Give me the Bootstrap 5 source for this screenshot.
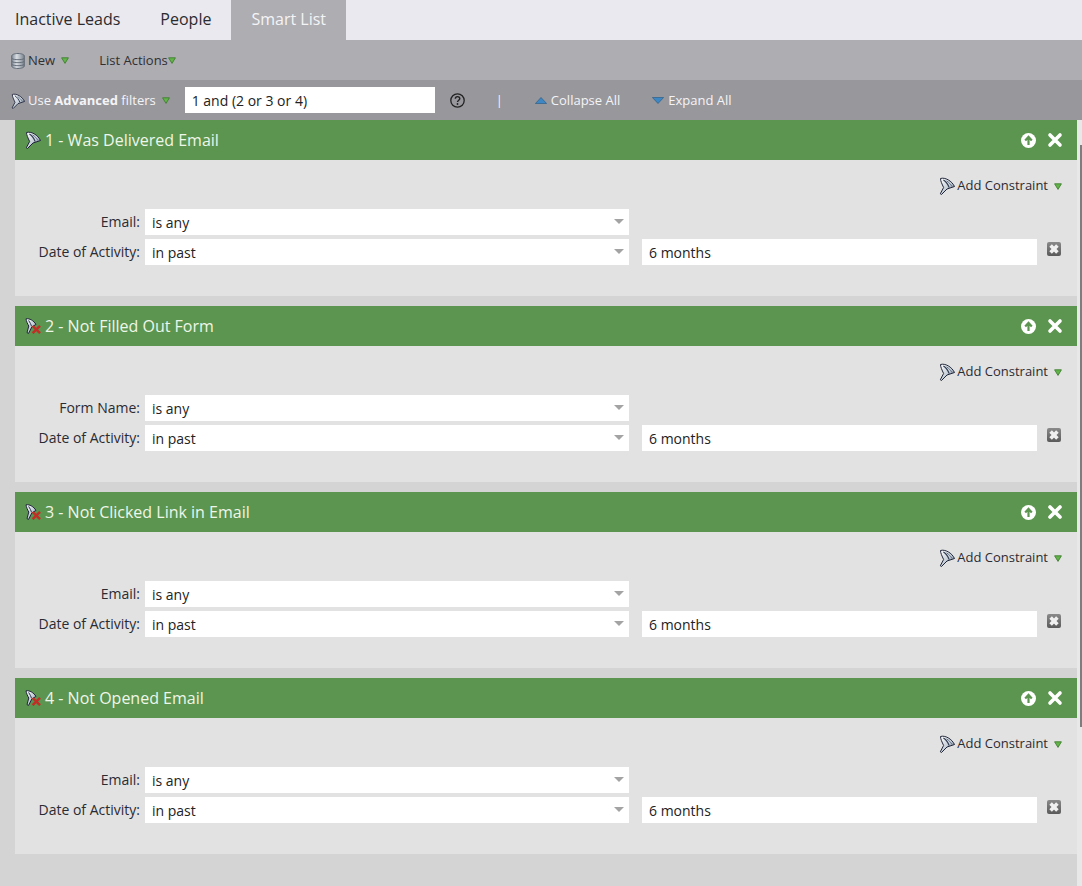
<!DOCTYPE html>
<html lang="en">
<head>
<meta charset="utf-8">
<title>Smart List</title>
<link rel="stylesheet" href="https://cdn.jsdelivr.net/npm/bootstrap@5.3.0/dist/css/bootstrap.min.css">
<style>
html,body{height:100%;overflow:hidden}
body{background:#d4d4d4;font-family:"Open Sans","Noto Sans",sans-serif;font-size:13px;color:#222}
.tabbar{background:#e9e9ef;height:40px}
.tabitem{font-size:16px;line-height:38px;height:40px;padding:0 15px;color:#2c2c30;text-decoration:none}
.tabitem.second{padding:0 20px 0 25px}
.tabitem.on{background:#aeadb2;color:#f4f4f6;padding:0 20px}
.toolbar{background:#aeadb2;height:40px;padding:1px 0 0 11px;color:#303033}
.filterbar{background:#98979c;height:40px;padding:1px 0 0 11px;color:#f4f4f6}
.gap3{margin-left:3px}
.tri7{margin-left:6px}
.listact{margin-left:30px}
.logic{width:250px;height:26px;background:#fff;color:#222;font-size:14px;line-height:27px;padding-left:7px;margin-left:15px;margin-top:-1px}
.helpic{margin-left:15px}
.sep{margin:0 32px 0 31px;font-size:13px}
.actlabel{margin-left:4px}
.expic{margin-left:32px}
.contentrow{display:flex}
.listwrap{flex:1 1 auto;padding-left:15px;display:flex;flex-direction:column;gap:10px}
.scrollstrip{flex:none;width:5px;height:766px;background:#e8e8e8;position:relative}
.scrollthumb{margin:25px 0 0 3px;width:2px;height:582px;background:#7d7d7d}
.rulehead{background:#5c954f;height:40px;color:#eef6ea;font-size:16px;padding:0 14px 0 10px}
.rulebody{background:#e2e2e2;height:136px;padding:17px 15px 0 0}
.addc{height:18px;color:#2b2b33;font-size:13px}
.addlabel{margin:0 6px 0 2px}
.fields{margin-top:14px}
.fieldrow{height:26px;margin-bottom:4px}
.flabel{flex:none;width:125px;text-align:right;font-size:14px;color:#2b2b33;margin-right:5px;line-height:26px}
.selbox{flex:none;width:484px;height:26px;background:#fff;color:#222;font-size:14px;line-height:28px;padding-left:7px;position:relative}
.selbox::after{content:"";position:absolute;right:5px;top:10px;border-left:5px solid transparent;border-right:5px solid transparent;border-top:5px solid #a3a3a3}
.valbox{flex:none;width:395px;height:26px;background:#fff;color:#222;font-size:14px;line-height:28px;padding-left:7px;margin-left:13px}
.rowx{margin:3px 0 0 10px}
.upic{margin-right:11px}
svg{display:block;flex:none}
</style>
</head>
<body>
<svg width="0" height="0" class="position-absolute">
<defs>
<linearGradient id="fun" x1="0" y1="0" x2="1" y2="1"><stop offset="0" stop-color="#ffffff"/><stop offset=".55" stop-color="#c3ccd6"/><stop offset="1" stop-color="#46536a"/></linearGradient>
<linearGradient id="cyl" x1="0" y1="0" x2="1" y2="0"><stop offset="0" stop-color="#7f8a96"/><stop offset=".4" stop-color="#d9dee3"/><stop offset="1" stop-color="#77818c"/></linearGradient>
<linearGradient id="bx" x1="0" y1="0" x2="0" y2="1"><stop offset="0" stop-color="#8a8a8a"/><stop offset="1" stop-color="#5a5a5a"/></linearGradient>
<symbol id="funnel" viewBox="0 0 16 18"><path d="M1.5 1.5C6 0 13 4 15.5 9.5L8 12 2.5 17.5 1.3 16.8 4.6 10.5C3 7 1.5 4 1.5 1.5Z" fill="url(#fun)" stroke="#20263a" stroke-width="1" stroke-linejoin="round"/><path d="M4.4 3C6.8 4.4 9 7.4 10.2 10.6" fill="none" stroke="#2e3a50" stroke-width="1.1"/><path d="M7.6 3.8C9.8 5.4 11.8 7.2 13 9.6" fill="none" stroke="#5a6a82" stroke-width=".9"/></symbol>
<symbol id="funnelx" viewBox="0 0 16 16"><path d="M1 .8C4.6 .2 8.6 2.6 11 6.4L6.8 9 3.6 15.4 2 14.6 3.8 8C2.4 5.8 1.4 3 1 .8Z" fill="url(#fun)" stroke="#20263a" stroke-width="1" stroke-linejoin="round"/><path d="M3.6 2.4C5 4.4 6 6.4 6.6 8.4" fill="none" stroke="#2e3a50" stroke-width="1"/><path d="M7.6 7.8 15 15.2M15 7.8 7.6 15.2" stroke="#c42c26" stroke-width="2.4"/></symbol>
<symbol id="db" viewBox="0 0 14 16"><path d="M.7 3v10c0 1.5 2.8 2.5 6.3 2.5s6.3-1 6.3-2.5V3C13.3 1.5 10.5.5 7 .5S.7 1.5.7 3Z" fill="url(#cyl)" stroke="#5b6570" stroke-width=".9"/><path d="M1 5.6c1.4 1.4 10.6 1.4 12 0M1 8.6c1.4 1.4 10.6 1.4 12 0M1 11.6c1.4 1.4 10.6 1.4 12 0" fill="none" stroke="#5f6873" stroke-width=".9"/></symbol>
<symbol id="tri" viewBox="0 0 8 7"><path d="M.6 .8H7.4L4 6.4Z" fill="#62b548" stroke="#3f7f31" stroke-width=".9" stroke-linejoin="round"/></symbol>
<symbol id="upc" viewBox="0 0 15 15"><circle cx="7.5" cy="7.5" r="7.5" fill="#fff"/><path d="M7.5 12V4.2M4.2 7.5 7.5 3.9l3.3 3.6" fill="none" stroke="#5c954f" stroke-width="2.2"/></symbol>
<symbol id="closex" viewBox="0 0 16 16"><path d="M3 3l10 10M13 3 3 13" stroke="#fff" stroke-width="3.6" stroke-linecap="round"/></symbol>
<symbol id="boxx" viewBox="0 0 14 14"><rect width="14" height="14" rx="2" fill="url(#bx)"/><path d="M3.6 3.6l6.8 6.8M10.4 3.6l-6.8 6.8" stroke="#f0f0f0" stroke-width="3.6"/></symbol>
</defs>
</svg>

<nav class="tabbar d-flex">
<a class="tabitem" href="#">Inactive Leads</a>
<a class="tabitem second" href="#">People</a>
<a class="tabitem on" href="#">Smart List</a>
</nav>

<div class="toolbar d-flex align-items-center">
<svg width="14" height="16"><use href="#db"/></svg>
<span class="gap3">New</span>
<svg class="tri7" width="8" height="7"><use href="#tri"/></svg>
<span class="listact">List Actions</span><svg width="8" height="7"><use href="#tri"/></svg>
</div>

<div class="filterbar d-flex align-items-center">
<svg width="14" height="16"><use href="#funnel"/></svg>
<span class="gap3">Use <b>Advanced</b> filters</span>
<svg class="tri7" width="8" height="7"><use href="#tri"/></svg>
<div class="logic">1 and (2 or 3 or 4)</div>
<svg class="helpic" width="15" height="15" viewBox="0 0 15 15"><circle cx="7.5" cy="7.5" r="6.7" fill="none" stroke="#222" stroke-width="1.3"/><path d="M5.3 5.8c0-2.9 4.5-2.9 4.5-.2 0 1.7-2.3 1.6-2.3 3.5" fill="none" stroke="#222" stroke-width="1.4"/><circle cx="7.5" cy="11" r=".9" fill="#222"/></svg>
<span class="sep">|</span>
<svg width="12" height="7" viewBox="0 0 12 7"><path d="M6 .5 11.6 6.5H.4Z" fill="#3c87c4" stroke="#24557f" stroke-width=".6"/></svg>
<span class="actlabel">Collapse All</span>
<svg class="expic" width="12" height="7" viewBox="0 0 12 7"><path d="M6 6.5 11.6 .5H.4Z" fill="#3c87c4" stroke="#24557f" stroke-width=".6"/></svg>
<span class="actlabel">Expand All</span>
</div>

<div class="contentrow">
<main class="listwrap">

<section>
<div class="rulehead d-flex align-items-center">
<svg class="me-1" width="16" height="18"><use href="#funnel"/></svg><span class="flex-grow-1">1 - Was Delivered Email</span>
<svg class="upic" width="15" height="15"><use href="#upc"/></svg>
<svg width="16" height="16"><use href="#closex"/></svg>
</div>
<div class="rulebody">
<div class="addc d-flex align-items-center justify-content-end"><svg width="16" height="18"><use href="#funnel"/></svg><span class="addlabel">Add Constraint</span><svg width="8" height="7"><use href="#tri"/></svg></div>
<div class="fields">
<div class="fieldrow d-flex"><div class="flabel">Email:</div><div class="selbox">is any</div></div>
<div class="fieldrow d-flex"><div class="flabel">Date of Activity:</div><div class="selbox">in past</div><div class="valbox">6 months</div><svg class="rowx" width="14" height="14"><use href="#boxx"/></svg></div>
</div>
</div>
</section>

<section>
<div class="rulehead d-flex align-items-center">
<svg class="me-1" width="16" height="16"><use href="#funnelx"/></svg><span class="flex-grow-1">2 - Not Filled Out Form</span>
<svg class="upic" width="15" height="15"><use href="#upc"/></svg>
<svg width="16" height="16"><use href="#closex"/></svg>
</div>
<div class="rulebody">
<div class="addc d-flex align-items-center justify-content-end"><svg width="16" height="18"><use href="#funnel"/></svg><span class="addlabel">Add Constraint</span><svg width="8" height="7"><use href="#tri"/></svg></div>
<div class="fields">
<div class="fieldrow d-flex"><div class="flabel">Form Name:</div><div class="selbox">is any</div></div>
<div class="fieldrow d-flex"><div class="flabel">Date of Activity:</div><div class="selbox">in past</div><div class="valbox">6 months</div><svg class="rowx" width="14" height="14"><use href="#boxx"/></svg></div>
</div>
</div>
</section>

<section>
<div class="rulehead d-flex align-items-center">
<svg class="me-1" width="16" height="16"><use href="#funnelx"/></svg><span class="flex-grow-1">3 - Not Clicked Link in Email</span>
<svg class="upic" width="15" height="15"><use href="#upc"/></svg>
<svg width="16" height="16"><use href="#closex"/></svg>
</div>
<div class="rulebody">
<div class="addc d-flex align-items-center justify-content-end"><svg width="16" height="18"><use href="#funnel"/></svg><span class="addlabel">Add Constraint</span><svg width="8" height="7"><use href="#tri"/></svg></div>
<div class="fields">
<div class="fieldrow d-flex"><div class="flabel">Email:</div><div class="selbox">is any</div></div>
<div class="fieldrow d-flex"><div class="flabel">Date of Activity:</div><div class="selbox">in past</div><div class="valbox">6 months</div><svg class="rowx" width="14" height="14"><use href="#boxx"/></svg></div>
</div>
</div>
</section>

<section>
<div class="rulehead d-flex align-items-center">
<svg class="me-1" width="16" height="16"><use href="#funnelx"/></svg><span class="flex-grow-1">4 - Not Opened Email</span>
<svg class="upic" width="15" height="15"><use href="#upc"/></svg>
<svg width="16" height="16"><use href="#closex"/></svg>
</div>
<div class="rulebody">
<div class="addc d-flex align-items-center justify-content-end"><svg width="16" height="18"><use href="#funnel"/></svg><span class="addlabel">Add Constraint</span><svg width="8" height="7"><use href="#tri"/></svg></div>
<div class="fields">
<div class="fieldrow d-flex"><div class="flabel">Email:</div><div class="selbox">is any</div></div>
<div class="fieldrow d-flex"><div class="flabel">Date of Activity:</div><div class="selbox">in past</div><div class="valbox">6 months</div><svg class="rowx" width="14" height="14"><use href="#boxx"/></svg></div>
</div>
</div>
</section>

</main>
<div class="scrollstrip"><div class="scrollthumb"></div></div>
</div>
<script src="https://cdn.jsdelivr.net/npm/bootstrap@5.3.0/dist/js/bootstrap.bundle.min.js"></script>
</body>
</html>
